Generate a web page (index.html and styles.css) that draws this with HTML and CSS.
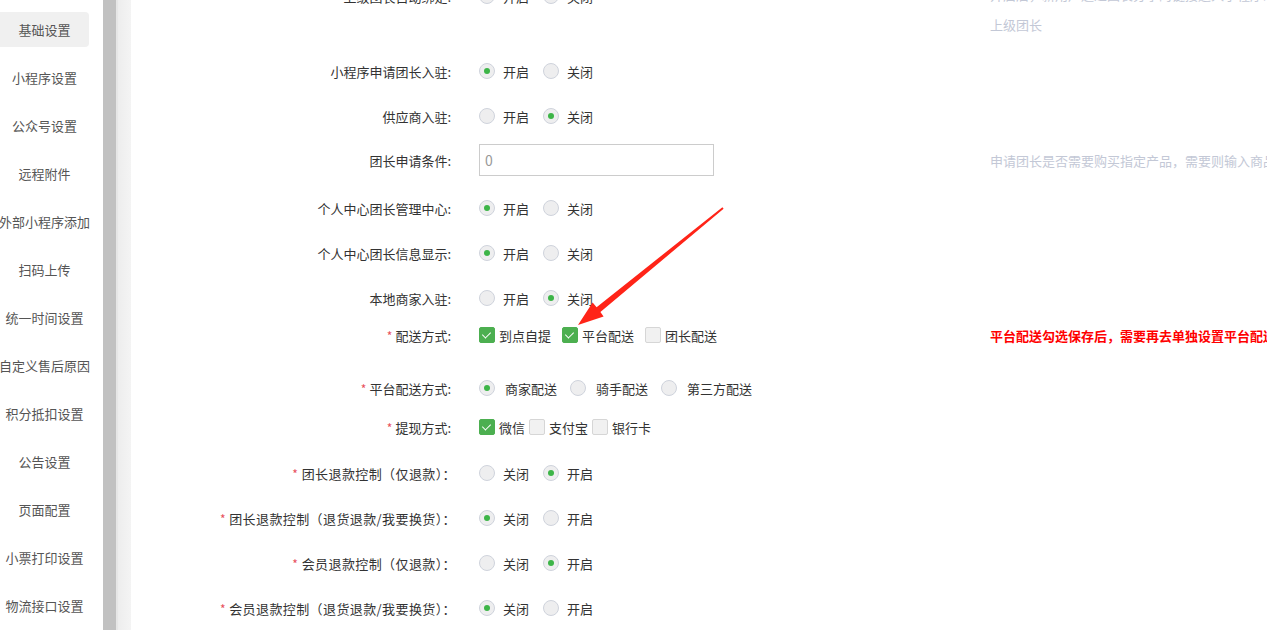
FILE: index.html
```html
<!DOCTYPE html>
<html lang="zh-CN">
<head>
    <meta charset="UTF-8">
    <title>基础设置</title>
    <link rel="stylesheet" href="styles.css">
</head>
<body>
    <div class="page">
        <div class="sidebar">
            <div class="nav-item active">基础设置</div>
            <div class="nav-item">小程序设置</div>
            <div class="nav-item">公众号设置</div>
            <div class="nav-item">远程附件</div>
            <div class="nav-item">外部小程序添加</div>
            <div class="nav-item">扫码上传</div>
            <div class="nav-item">统一时间设置</div>
            <div class="nav-item">自定义售后原因</div>
            <div class="nav-item">积分抵扣设置</div>
            <div class="nav-item">公告设置</div>
            <div class="nav-item">页面配置</div>
            <div class="nav-item">小票打印设置</div>
            <div class="nav-item">物流接口设置</div>
        </div>
        <div class="scroll-bar"></div>
        <div class="scroll-edge"></div>
        <div class="scroll-track"></div>

        <div class="content">
            <div class="form">
                <div class="row row-first">
                    <div class="label">上级团长自动绑定:</div>
                    <div class="control">
                        <label class="opt"><span class="radio"></span>开启</label>
                        <label class="opt"><span class="radio on"></span>关闭</label>
                    </div>
                    <div class="help help-two">开启后，新用户通过团长分享的链接进入小程序时，自动绑定为<br>上级团长</div>
                </div>

                <div class="row gap-43">
                    <div class="label">小程序申请团长入驻:</div>
                    <div class="control">
                        <label class="opt"><span class="radio on"></span>开启</label>
                        <label class="opt"><span class="radio"></span>关闭</label>
                    </div>
                </div>

                <div class="row">
                    <div class="label">供应商入驻:</div>
                    <div class="control">
                        <label class="opt"><span class="radio"></span>开启</label>
                        <label class="opt"><span class="radio on"></span>关闭</label>
                    </div>
                </div>

                <div class="row gap-12">
                    <div class="label">团长申请条件:</div>
                    <div class="control">
                        <input class="text-input" type="text" value="0">
                    </div>
                    <div class="help">申请团长是否需要购买指定产品，需要则输入商品ID，多个商品用英文逗号隔开</div>
                </div>

                <div class="row gap-16">
                    <div class="label">个人中心团长管理中心:</div>
                    <div class="control">
                        <label class="opt"><span class="radio on"></span>开启</label>
                        <label class="opt"><span class="radio"></span>关闭</label>
                    </div>
                </div>

                <div class="row">
                    <div class="label">个人中心团长信息显示:</div>
                    <div class="control">
                        <label class="opt"><span class="radio on"></span>开启</label>
                        <label class="opt"><span class="radio"></span>关闭</label>
                    </div>
                </div>

                <div class="row">
                    <div class="label">本地商家入驻:</div>
                    <div class="control">
                        <label class="opt"><span class="radio"></span>开启</label>
                        <label class="opt"><span class="radio on"></span>关闭</label>
                    </div>
                </div>

                <div class="row gap-5">
                    <div class="label"><span class="req">*</span> 配送方式:</div>
                    <div class="control">
                        <label class="chk"><span class="box on"></span>到点自提</label>
                        <label class="chk"><span class="box on"></span>平台配送</label>
                        <label class="chk"><span class="box"></span>团长配送</label>
                    </div>
                    <div class="help warn">平台配送勾选保存后，需要再去单独设置平台配送的配送费用和范围</div>
                </div>

                <div class="row gap-21">
                    <div class="label"><span class="req">*</span> 平台配送方式:</div>
                    <div class="control">
                        <label class="opt opt-wide"><span class="radio on"></span>商家配送</label>
                        <label class="opt opt-wide"><span class="radio"></span>骑手配送</label>
                        <label class="opt opt-wide"><span class="radio"></span>第三方配送</label>
                    </div>
                </div>

                <div class="row gap-7">
                    <div class="label"><span class="req">*</span> 提现方式:</div>
                    <div class="control tight">
                        <label class="chk"><span class="box on"></span>微信</label>
                        <label class="chk"><span class="box"></span>支付宝</label>
                        <label class="chk"><span class="box"></span>银行卡</label>
                    </div>
                </div>

                <div class="row gap-14">
                    <div class="label long"><span class="req">*</span> 团长退款控制（仅退款）：</div>
                    <div class="control">
                        <label class="opt"><span class="radio"></span>关闭</label>
                        <label class="opt"><span class="radio on"></span>开启</label>
                    </div>
                </div>

                <div class="row">
                    <div class="label long"><span class="req">*</span> 团长退款控制（退货退款/我要换货）：</div>
                    <div class="control">
                        <label class="opt"><span class="radio on"></span>关闭</label>
                        <label class="opt"><span class="radio"></span>开启</label>
                    </div>
                </div>

                <div class="row">
                    <div class="label long"><span class="req">*</span> 会员退款控制（仅退款）：</div>
                    <div class="control">
                        <label class="opt"><span class="radio"></span>关闭</label>
                        <label class="opt"><span class="radio on"></span>开启</label>
                    </div>
                </div>

                <div class="row">
                    <div class="label long"><span class="req">*</span> 会员退款控制（退货退款/我要换货）：</div>
                    <div class="control">
                        <label class="opt"><span class="radio on"></span>关闭</label>
                        <label class="opt"><span class="radio"></span>开启</label>
                    </div>
                </div>
            </div>
        </div>
    </div>

    <!-- annotation arrow drawn over the form -->
    <svg class="arrow" width="1267" height="630" viewBox="0 0 1267 630">
        <polygon fill="#ff2418" points="578,325 592.6,302.6 596.6,307.2 722.4,207.2 723.6,208.8 600.4,311.9 603.6,316.5"/>
    </svg>
</body>
</html>
```

FILE: styles.css
```css
html, body {
    margin: 0;
    padding: 0;
    height: 630px;
    overflow: hidden;
    background: #fff;
}

body {
    font-family: "Noto Sans CJK SC", "Noto Sans", sans-serif;
    font-size: 13px;
    color: #333;
    position: relative;
}

.page {
    display: flex;
    height: 630px;
}

/* left menu */
.sidebar {
    width: 103px;
    flex-shrink: 0;
    padding-top: 12px;
    box-sizing: border-box;
}

.nav-item {
    width: 89px;
    height: 35px;
    margin-bottom: 13px;
    display: flex;
    align-items: center;
    justify-content: center;
    white-space: nowrap;
    color: #555;
    border-radius: 0 4px 4px 0;
}

.nav-item.active {
    background-color: #f0f0f0;
}

.scroll-bar {
    width: 13px;
    flex-shrink: 0;
    background-color: #c1c1c1;
}

.scroll-edge {
    width: 2px;
    flex-shrink: 0;
    background-color: #e6e6e6;
}

.scroll-track {
    width: 13px;
    flex-shrink: 0;
    background: linear-gradient(to right, #ededed, #f4f4f4);
}

/* form */
.content {
    flex: 1;
    min-width: 0;
    overflow: hidden;
}

.form {
    margin-top: -20px;
}

.row {
    display: flex;
    align-items: center;
    height: 32px;
    margin-top: 13px;
    white-space: nowrap;
}

.row-first { margin-top: 0; }
.gap-43 { margin-top: 43px; }
.gap-12 { margin-top: 12px; }
.gap-16 { margin-top: 16px; }
.gap-5 { margin-top: 5px; }
.gap-21 { margin-top: 21px; }
.gap-7 { margin-top: 7px; }
.gap-14 { margin-top: 14px; }

.label {
    width: 320px;
    flex-shrink: 0;
    text-align: right;
}

/* full-width colon sits left in its box, so let these labels run a bit further */
.label.long {
    width: 325px;
    margin-right: -5px;
    letter-spacing: 0.4px;
}

.req {
    color: #e8505b;
    font-size: 12px;
}

.control {
    width: 511px;
    flex-shrink: 0;
    margin-left: 28px;
    display: flex;
    align-items: center;
}

.help {
    color: #c3c8d6;
}

.help-two {
    align-self: flex-start;
    line-height: 30px;
}

.warn {
    color: #ff0000;
    font-weight: bold;
}

.text-input {
    width: 235px;
    height: 32px;
    box-sizing: border-box;
    border: 1px solid #ccc;
    padding: 0 5px;
    font-family: inherit;
    font-size: 14px;
    color: #999;
    outline: none;
}

/* radio */
.opt {
    display: inline-flex;
    align-items: center;
    margin-right: 14px;
}

.radio {
    width: 16px;
    height: 16px;
    box-sizing: border-box;
    border-radius: 50%;
    border: 1px solid #cfd3dc;
    background-color: #eeeeef;
    margin-right: 8px;
    position: relative;
}

.opt-wide {
    margin-right: 13px;
}

.opt-wide .radio {
    margin-right: 10px;
}

.radio.on::after {
    content: "";
    position: absolute;
    left: 4px;
    top: 4px;
    width: 6px;
    height: 6px;
    border-radius: 50%;
    background-color: #3db548;
}

/* checkbox */
.chk {
    display: inline-flex;
    align-items: center;
    margin-right: 11px;
}

.tight .chk {
    margin-right: 4px;
}

.box {
    width: 16px;
    height: 16px;
    box-sizing: border-box;
    border-radius: 2px;
    border: 1px solid #d6d6d6;
    background-color: #f1f1f1;
    margin-right: 4px;
    position: relative;
}

.box.on {
    background-color: #4caf50;
    border-color: #4caf50;
}

.box.on::after {
    content: "";
    position: absolute;
    left: 4px;
    top: 2px;
    width: 4px;
    height: 7px;
    border: solid #fff;
    border-width: 0 1.5px 1.5px 0;
    transform: rotate(45deg);
}

.arrow {
    position: absolute;
    left: 0;
    top: 0;
    pointer-events: none;
}
```
